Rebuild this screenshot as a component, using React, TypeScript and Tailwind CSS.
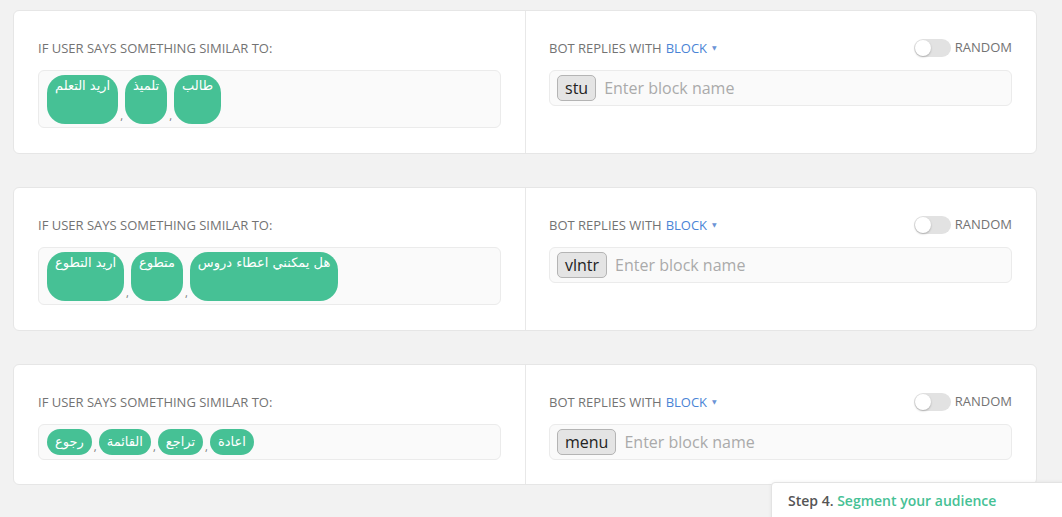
type Rule = {
  phrases: string[];
  block: string;
  tall: boolean;
};

const rules: Rule[] = [
  { phrases: ['اريد التعلم', 'تلميذ', 'طالب'], block: 'stu', tall: true },
  { phrases: ['اريد التطوع', 'متطوع', 'هل يمكنني اعطاء دروس'], block: 'vlntr', tall: true },
  { phrases: ['رجوع', 'القائمة', 'تراجع', 'اعادة'], block: 'menu', tall: false },
];

function Toggle() {
  return (
    <div className="w-[37px] h-[18px] rounded-full bg-[#e2e2e2] flex items-center px-[1px]">
      <div className="w-[16px] h-[16px] rounded-full bg-white shadow-[0_1px_2px_rgba(0,0,0,0.25)]" />
    </div>
  );
}

function RuleCard({ rule }: { rule: Rule }) {
  return (
    <div className="flex bg-white border border-[#e6e6e6] rounded-[6px]">
      {/* left: user phrases */}
      <div className={`w-[512px] shrink-0 border-r border-[#e8e8e8] px-[24px] pt-[28px] ${rule.tall ? 'pb-[25px]' : 'pb-[24px]'}`}>
        <div className="text-[13px] leading-[18px] uppercase text-[#737373]">If user says something similar to:</div>
        <div
          className={`mt-[13px] bg-[#fafafa] border border-[#ebebeb] rounded-[6px] pl-[8px] pt-[4px] ${
            rule.tall ? 'h-[58px]' : 'h-[36px]'
          }`}
        >
          <div className="flex items-end">
            {rule.phrases.map((p, i) => (
              <div key={p} className="flex items-end">
                {i > 0 && <span className="text-[11px] leading-[14px] text-[#777] mx-[2px] mb-[1px]">,</span>}
                <div
                  dir="rtl"
                  className={`bg-[#46c195] text-white text-[13px] px-[8px] flex ${
                    rule.tall ? 'h-[49px] rounded-[18px] pt-[1px] items-start' : 'h-[26px] rounded-full items-center'
                  }`}
                  style={{ fontFamily: '"DejaVu Sans", "Open Sans", sans-serif' }}
                >
                  {p}
                </div>
              </div>
            ))}
          </div>
        </div>
      </div>

      {/* right: bot reply */}
      <div className="flex-1 pl-[23px] pr-[24px] pt-[28px]">
        <div className="flex items-center justify-between h-[18px]">
          <div className="text-[13px] leading-[18px] uppercase text-[#737373] flex items-center">
            Bot replies with
            <span className="text-[#4a84d6] ml-[4px]">Block</span>
            <span className="text-[#6b93d6] text-[6px] ml-[5px]">▼</span>
          </div>
          <div className="flex items-center gap-[4px]">
            <Toggle />
            <span className="text-[13px] uppercase text-[#737373]">Random</span>
          </div>
        </div>
        <div className="mt-[13px] h-[36px] bg-[#fafafa] border border-[#ebebeb] rounded-[6px] flex items-center pl-[7px] gap-[8px]">
          <span className="h-[26px] px-[7px] flex items-center bg-[#e4e4e4] border border-[#b4b4b4] rounded-[5px] text-[16px] text-[#222]">
            {rule.block}
          </span>
          <span className="text-[16px] text-[#aaa]">Enter block name</span>
        </div>
      </div>
    </div>
  );
}

export default function App() {
  return (
    <div
      className="relative w-[1062px] h-[517px] overflow-hidden bg-[#f2f2f2]"
      style={{ fontFamily: '"Open Sans", "DejaVu Sans", sans-serif' }}
    >
      <div className="pt-[10px] pl-[13px] w-[1037px] flex flex-col gap-[33px]">
        {rules.map((r) => (
          <RuleCard key={r.block} rule={r} />
        ))}
      </div>

      {/* onboarding step popup */}
      <div className="absolute left-[771px] top-[482px] w-[300px] h-[40px] bg-white border border-[#e3e3e3] rounded-tl-[4px] shadow-[0_0_4px_rgba(0,0,0,0.06)] pl-[16px] pt-[7px] text-[14px] font-semibold">
        <span className="text-[#555]">Step 4. </span>
        <span className="text-[#46c195]">Segment your audience</span>
      </div>
    </div>
  );
}
